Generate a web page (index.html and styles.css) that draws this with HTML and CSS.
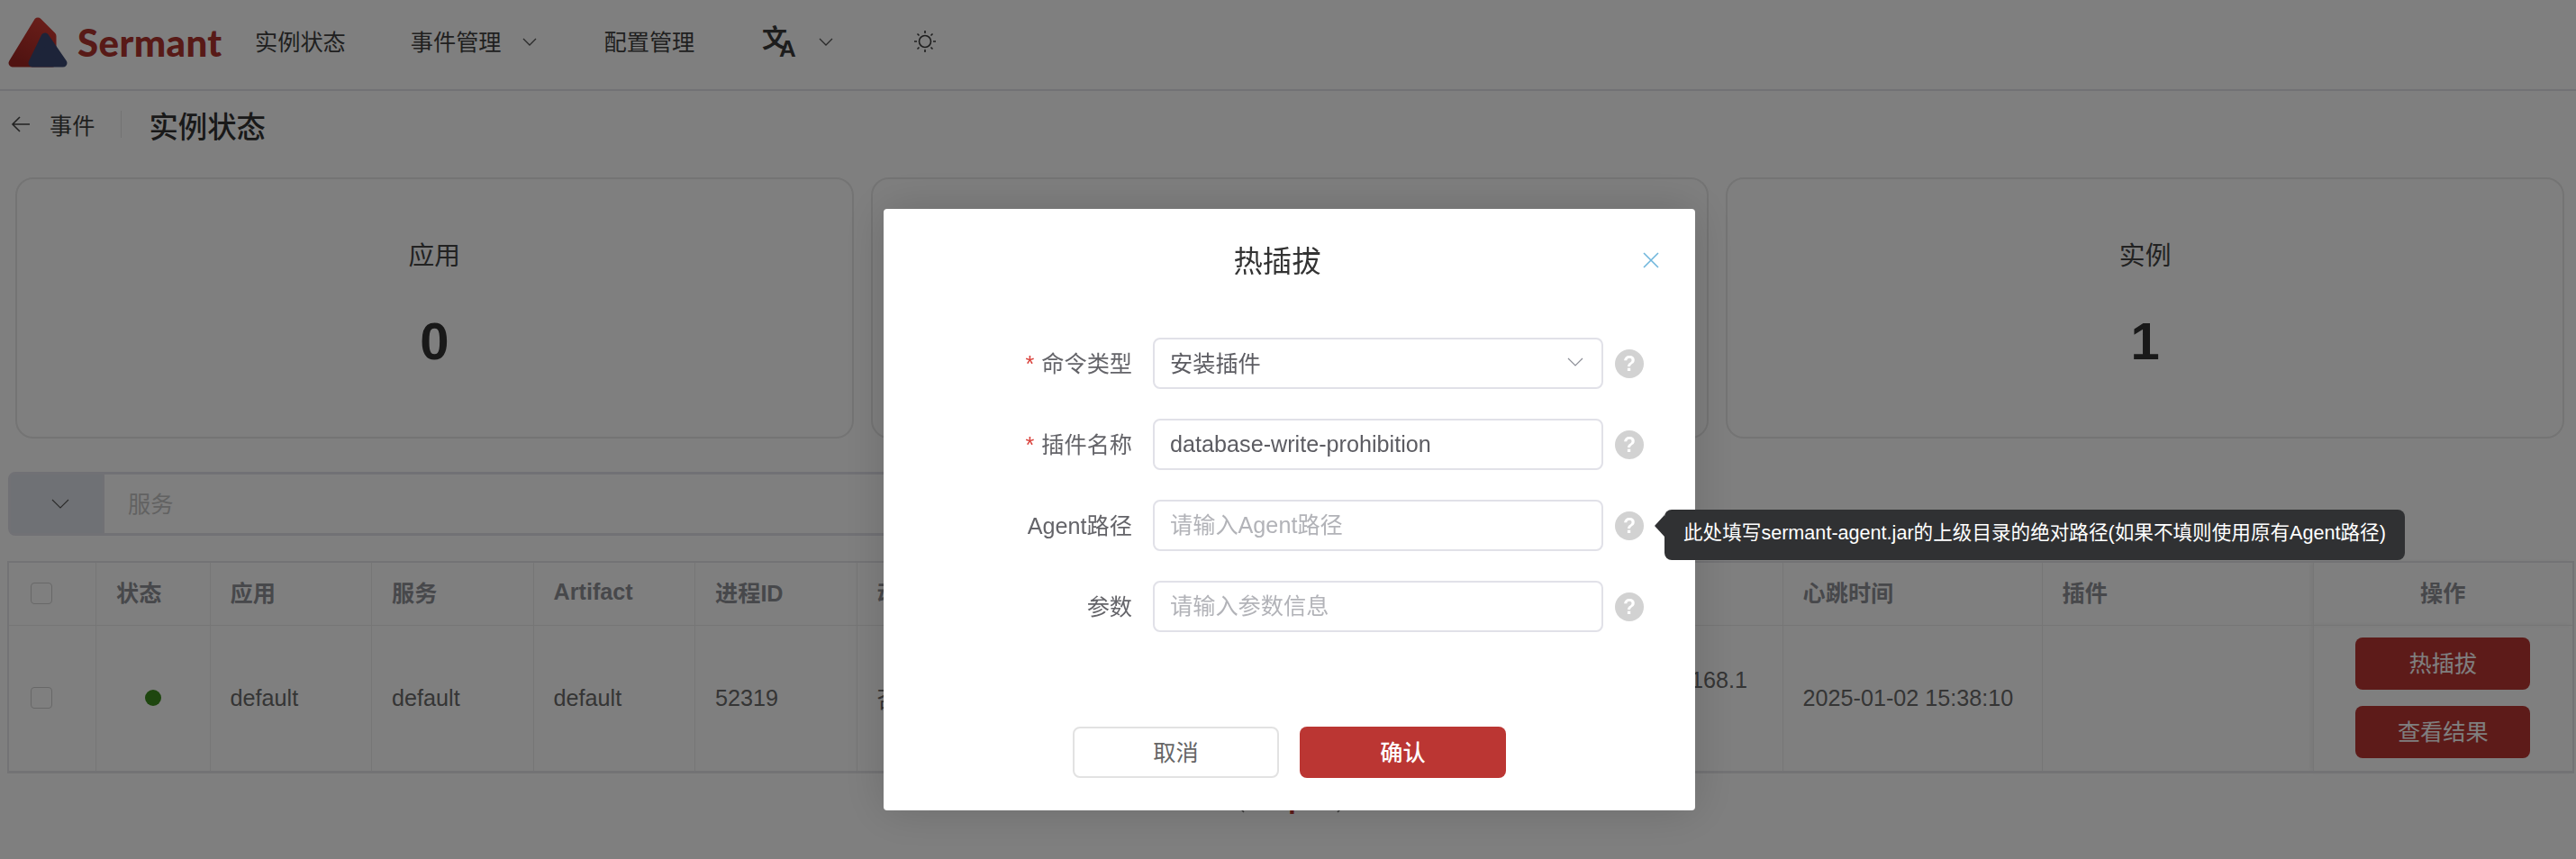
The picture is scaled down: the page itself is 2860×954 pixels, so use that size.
FILE: index.html
```html
<!DOCTYPE html>
<html lang="zh-CN">
<head>
<meta charset="utf-8">
<title>Sermant</title>
<link rel="stylesheet" href="styles.css">
</head>
<body>
<div class="page">
  <header class="topbar">
    <a class="brand">
      <svg class="brand-mark" viewBox="0 0 80 80" aria-hidden="true">
        <defs>
          <linearGradient id="redgrad" x1="0.7" y1="0" x2="0.2" y2="1">
            <stop offset="0" stop-color="#d03a32"/>
            <stop offset="1" stop-color="#a02622"/>
          </linearGradient>
        </defs>
        <path d="M42 24 L14 70 H58 V40 Z" fill="url(#redgrad)" stroke="url(#redgrad)" stroke-width="9" stroke-linejoin="round"/>
        <path d="M50 41 L36 70 H70 Z" fill="#3b4872" stroke="#3b4872" stroke-width="9" stroke-linejoin="round"/>
      </svg>
      <span class="brand-name">Sermant</span>
    </a>
    <nav class="nav">
      <span class="nav-item">实例状态</span>
      <span class="nav-item nav-drop">事件管理
        <svg class="chev" viewBox="0 0 16 9"><path d="M1 1l7 7 7-7"/></svg>
      </span>
      <span class="nav-item">配置管理</span>
      <span class="nav-item nav-drop nav-lang">
        <svg class="lang" viewBox="0 0 40 36" aria-hidden="true"><text class="lang-zh" x="0" y="25">文</text><text class="lang-a" x="19" y="35">A</text></svg>
        <svg class="chev" viewBox="0 0 16 9"><path d="M1 1l7 7 7-7"/></svg>
      </span>
      <span class="nav-item">
        <svg class="sun" viewBox="0 0 26 26" aria-hidden="true">
          <circle cx="13" cy="13" r="6.5"/>
          <path d="M13 1v3M13 22v3M1 13h3M22 13h3M4.500 4.500l2 2M19.500 19.500l2 2M4.500 21.500l2-2M19.500 6.500l2-2"/>
        </svg>
      </span>
    </nav>
  </header>

  <div class="crumbs">
    <svg class="back" viewBox="0 0 22 20" aria-hidden="true"><path d="M21 10H2M10 2l-8 8 8 8"/></svg>
    <span class="crumb-link">事件</span>
    <span class="crumb-sep"></span>
    <h1 class="crumb-title">实例状态</h1>
  </div>

  <section class="cards">
    <div class="card"><div class="card-label">应用</div><div class="card-value">0</div></div>
    <div class="card"><div class="card-label">服务</div><div class="card-value">0</div></div>
    <div class="card"><div class="card-label">实例</div><div class="card-value">1</div></div>
  </section>

  <div class="search">
    <div class="search-select"><svg class="chev chev-dark" viewBox="0 0 20 11"><path d="M1 1l9 9 9-9"/></svg></div>
    <div class="search-text">服务</div>
  </div>

  <table class="grid">
    <colgroup>
      <col class="w-check"><col class="w-status"><col class="w-app"><col class="w-app"><col class="w-app"><col class="w-app">
      <col class="w-app"><col class="w-app"><col class="w-app"><col class="w-mid"><col class="w-ip">
      <col class="w-beat"><col class="w-plugin"><col class="w-op">
    </colgroup>
    <thead>
      <tr>
        <th class="cell-check"><span class="checkbox"></span></th>
        <th>状态</th><th>应用</th><th>服务</th><th>Artifact</th><th>进程ID</th>
        <th>动态安装</th><th>版本</th><th>启动时间</th><th>在线</th><th>IP</th>
        <th>心跳时间</th><th>插件</th><th class="cell-op">操作</th>
      </tr>
    </thead>
    <tbody>
      <tr>
        <td class="cell-check"><span class="checkbox"></span></td>
        <td class="cell-dot"><span class="dot"></span></td>
        <td>default</td><td>default</td><td>default</td><td>52319</td>
        <td>否</td><td>2.0.0</td><td>2025-01-02</td><td>是</td>
        <td class="cell-ip">192.168.168.1<br>10.0.0.1</td>
        <td>2025-01-02 15:38:10</td><td></td>
        <td class="cell-op">
          <div class="ops">
            <button class="btn-op">热插拔</button>
            <button class="btn-op">查看结果</button>
          </div>
        </td>
      </tr>
    </tbody>
  </table>

  <div class="pager">
    <svg class="pager-chev" viewBox="0 0 14 24"><path d="M12 1L2 12l10 11"/></svg>
    <span class="pager-num">1</span>
    <svg class="pager-chev" viewBox="0 0 14 24"><path d="M2 1l10 11L2 23"/></svg>
  </div>
</div>

<div class="overlay">
  <div class="modal">
    <button class="modal-close" aria-label="关闭"><svg viewBox="0 0 18 18"><path d="M1 1l16 16M17 1L1 17"/></svg></button>
    <h2 class="modal-title">热插拔</h2>
    <form class="form">
      <div class="row">
        <label class="label"><span class="req">*</span>命令类型</label>
        <div class="field field-select"><span>安装插件</span><svg class="select-chev" viewBox="0 0 18 10"><path d="M1 1l8 8 8-8"/></svg></div>
        <span class="help">?</span>
      </div>
      <div class="row">
        <label class="label"><span class="req">*</span>插件名称</label>
        <input class="field" value="database-write-prohibition">
        <span class="help">?</span>
      </div>
      <div class="row">
        <label class="label">Agent路径</label>
        <input class="field" placeholder="请输入Agent路径">
        <span class="help">?
          <span class="tooltip">此处填写sermant-agent.jar的上级目录的绝对路径(如果不填则使用原有Agent路径)</span>
        </span>
      </div>
      <div class="row">
        <label class="label">参数</label>
        <input class="field" placeholder="请输入参数信息">
        <span class="help">?</span>
      </div>
    </form>
    <div class="modal-foot">
      <button class="btn btn-plain">取消</button>
      <button class="btn btn-primary">确认</button>
    </div>
  </div>
</div>
</body>
</html>
```
FILE: styles.css
```css
* { box-sizing: border-box; }
html, body { margin: 0; height: 100%; overflow: hidden; background: #fff; }
body {
  font-family: "Liberation Sans", "Noto Sans CJK SC", sans-serif;
  font-size: 25.2px;
  color: #5c5c5c;
}
.page { width: 2860px; height: 954px; overflow: hidden; }

/* top bar */
.topbar {
  height: 101px;
  display: flex;
  align-items: flex-start;
  border-bottom: 2px solid #e2e2ea;
}
.brand { width: 283px; height: 80px; display: flex; align-items: flex-start; flex: none; }
.brand-mark { width: 80px; height: 80px; flex: none; }
.brand-name {
  font-family: "Lato", sans-serif;
  font-weight: 900;
  font-size: 42px;
  line-height: 52px;
  margin: 21px 0 0 6px;
  color: #b0342f;
  letter-spacing: 0.4px;
}
.nav { display: flex; align-items: center; gap: 72px; height: 90px; color: #414141; }
.nav-item { display: flex; align-items: center; gap: 26px; white-space: nowrap; }
.nav-drop .chev { margin-left: -3px; margin-right: 3px; }
.nav-lang { margin-left: 3px; }
.chev { width: 16px; height: 9px; fill: none; stroke: #555; stroke-width: 1.3; margin-top: 2px; }
.chev-dark { width: 20px; height: 11px; stroke: #555; stroke-width: 1.1; margin: 0; }
.lang { width: 40px; height: 36px; margin-top: 2px; }
.lang-zh { font-size: 28px; font-weight: 700; fill: #3a3a3a; }
.lang-a { font-size: 26px; font-weight: 700; fill: #3a3a3a; }
.sun { width: 26px; height: 26px; margin: 2px 0 0 14px; fill: none; stroke: #3c3c3c; stroke-width: 1.6; }

/* breadcrumb */
.crumbs { height: 76px; display: flex; align-items: center; padding: 0 0 2px 12px; color: #3e3e3e; }
.back { width: 22px; height: 20px; fill: none; stroke: #444; stroke-width: 1.6; }
.crumb-link { margin-left: 21px; }
.crumb-sep { width: 1px; height: 30px; background: #e6e6e6; margin: 0 30px 0 29px; }
.crumb-title { margin: 0; font-size: 32.4px; font-weight: 500; color: #333; }

/* stat cards */
.cards { display: grid; grid-template-columns: repeat(3, 1fr); gap: 19px; margin: 20px 13px 0 17px; }
.card {
  height: 290px;
  border: 2px solid #e8e8e8;
  border-radius: 20px;
  display: flex;
  flex-direction: column;
  align-items: center;
  padding-top: 67px;
}
.card-label { font-size: 28.8px; line-height: 36px; color: #444; }
.card-value { font-size: 58px; font-weight: 700; line-height: 66px; margin-top: 44px; color: #333; }

/* search */
.search {
  width: 1200px;
  height: 71px;
  margin: 37px 0 0 9px;
  border: 3px solid #e2e2ea;
  border-radius: 8px;
  display: flex;
}
.search-select {
  width: 104px;
  background: #dfe3ea;
  border-right: 2px solid #e2e2ea;
  display: flex;
  align-items: center;
  justify-content: center;
  padding: 0 2px 0 10px;
}
.search-text { padding: 0 0 3px 26px; display: flex; align-items: center; color: #c4c4c4; }

/* table */
.grid {
  table-layout: fixed;
  width: 2847px;
  margin: 28px 0 0 8px;
  border-collapse: collapse;
  border: 2px solid #e6e6ea;
  border-bottom-width: 3px;
}
.w-check { width: 97.5px; }
.w-status { width: 126.5px; }
.w-app { width: 179.5px; }
.w-mid { width: 267px; }
.w-ip { width: 222.5px; }
.w-beat { width: 288px; }
.w-plugin { width: 301.5px; }
.w-op { width: 288px; }
.grid th, .grid td { border: 1px solid #ececec; padding: 0 22px; text-align: left; }
.grid th { height: 70px; font-weight: 700; color: #8f9096; padding-bottom: 4px; }
.grid td { height: 163px; color: #6a6a6a; }
.grid .cell-check { padding: 0 0 0 24px; line-height: 0; }
.checkbox { display: inline-block; width: 24px; height: 24px; border: 1.5px solid #d0d0d0; border-radius: 4px; }
.grid .cell-dot { text-align: center; padding: 0; line-height: 0; }
.dot { display: inline-block; width: 18px; height: 18px; border-radius: 50%; background: #3c8c1e; }
.cell-ip { line-height: 40px; white-space: nowrap; }
.grid .cell-op { text-align: center; padding: 0; box-shadow: -3px 0 5px rgba(0,0,0,.06); }
.grid th.cell-op { padding-bottom: 4px; }
.ops { display: flex; flex-direction: column; align-items: center; gap: 18px; }
.btn-op {
  width: 194px;
  height: 58px;
  border: 0;
  border-radius: 8px;
  background: #bb3633;
  color: #fff;
  font: inherit;
  padding: 0 0 4px;
}

/* pager */
.pager { display: flex; justify-content: center; align-items: flex-end; gap: 42px; margin: 12px 0 0 6px; height: 32px; }
.pager-chev { width: 14px; height: 24px; fill: none; stroke: #777; stroke-width: 1.6; }
.pager-num { font-family: "Open Sans", sans-serif; font-size: 28px; line-height: 20px; font-weight: 700; color: #bb3633; }

/* modal */
.overlay {
  position: fixed;
  inset: 0;
  background: rgba(0,0,0,.5);
  display: flex;
  justify-content: center;
  align-items: flex-start;
  padding: 232px 0 0 3px;
}
.modal {
  position: relative;
  width: 901px;
  height: 668px;
  background: #fff;
  border-radius: 4px;
  box-shadow: 0 0 50px rgba(0,0,0,.16);
}
.modal-close {
  position: absolute;
  top: 48px;
  right: 40px;
  width: 18px;
  height: 18px;
  border: 0;
  padding: 0;
  background: none;
  line-height: 0;
}
.modal-close svg { width: 18px; height: 18px; fill: none; stroke: #6fb6dc; stroke-width: 1.6; }
.modal-title {
  margin: 0;
  padding: 39px 27px 0 0;
  height: 143px;
  text-align: center;
  font-size: 32.4px;
  line-height: 40px;
  font-weight: 400;
  color: #333;
}
.form { display: flex; flex-direction: column; gap: 33px; }
.row { display: flex; align-items: center; height: 57px; }
.label { width: 276px; text-align: right; color: #646469; flex: none; padding-bottom: 3px; }
.req { color: #d9403a; margin-right: 8px; }
.field {
  width: 500px;
  height: 57px;
  margin-left: 23px;
  border: 2px solid #e1e1e8;
  border-radius: 8px;
  padding: 0 17px;
  font: inherit;
  color: #5c5c62;
  background: #fff;
  outline: none;
  flex: none;
}
.field::placeholder { color: #b2b3b8; opacity: 1; }
.field-select { display: flex; align-items: center; justify-content: space-between; padding: 0 20px 3px 17px; }
.select-chev { width: 18px; height: 10px; fill: none; stroke: #8d8f98; stroke-width: 1.2; }
.help {
  position: relative;
  width: 32px;
  height: 32px;
  margin-left: 13px;
  border-radius: 50%;
  background: #d2d2d2;
  color: #fff;
  font-size: 23px;
  font-weight: 700;
  line-height: 32px;
  text-align: center;
  flex: none;
}
.tooltip {
  position: absolute;
  left: 55px;
  top: -2px;
  height: 56px;
  padding: 0 21px 4px 21px;
  display: flex;
  align-items: center;
  white-space: nowrap;
  background: #303133;
  border-radius: 8px;
  color: #fff;
  font-size: 21.6px;
  font-weight: 400;
  line-height: 1;
}
.tooltip::before {
  content: "";
  position: absolute;
  left: -11px;
  top: 6px;
  border-style: solid;
  border-width: 12px 11px 12px 0;
  border-color: transparent #303133 transparent transparent;
}
.modal-foot { display: flex; justify-content: center; gap: 23px; margin-top: 105px; }
.btn { width: 229px; height: 57px; border-radius: 8px; font: inherit; padding: 0 0 3px; }
.btn-plain { background: #fff; border: 2px solid #e2e2e2; color: #666; }
.btn-primary { background: #bb3633; border: 0; color: #fff; font-weight: 500; }
```
